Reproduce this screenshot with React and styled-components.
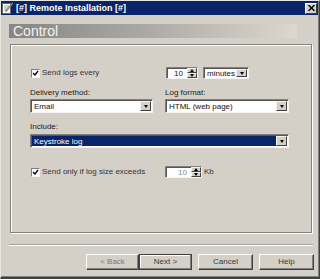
import React from "react";
import styled, { createGlobalStyle } from "styled-components";

const Global = createGlobalStyle`
  html, body { margin: 0; padding: 0; background: #d4d0c8; }
  body { font-family: "Liberation Sans", Arial, sans-serif; }
  * { box-sizing: border-box; }
`;

const Window = styled.div`
  width: 320px;
  height: 279px;
  background: #d4d0c8;
  border-top: 1px solid #e8e6e0;
  border-left: 1px solid #e8e6e0;
  border-right: 1px solid #404040;
  border-bottom: 2px solid #404040;
  box-shadow: inset -1px -1px 0 #808080;
  display: flex;
  flex-direction: column;
  overflow: hidden;
`;

const TitleBar = styled.div`
  height: 14px;
  margin-right: 1px;
  background: #0a246a;
  display: flex;
  align-items: center;
  padding: 0 1px 0 1px;
  gap: 3px;
`;

const TitleText = styled.span`
  flex: 1;
  color: #fff;
  font-weight: bold;
  font-size: 9px;
  line-height: 14px;
  white-space: nowrap;
`;

const CloseBtn = styled.div`
  width: 12px;
  height: 11px;
  background: #d4d0c8;
  border-top: 1px solid #fff;
  border-left: 1px solid #fff;
  border-right: 1px solid #404040;
  border-bottom: 1px solid #404040;
  display: flex;
  align-items: center;
  justify-content: center;
`;

const Body = styled.div`
  flex: 1;
  display: flex;
  flex-direction: column;
  padding: 9px 0 0 8px;
`;

const Band = styled.div`
  width: 288px;
  height: 14px;
  background: linear-gradient(to right, #858585 0%, #a9a7a2 45%, #dcd8d0 100%);
  color: #f2f2f2;
  font-size: 14px;
  line-height: 15px;
  padding-left: 4px;
  overflow: hidden;
`;

const Panel = styled.div`
  margin: 6px 0 0 1px;
  width: 302px;
  height: 189px;
  border: 1px solid #808080;
  box-shadow: inset 1px 1px 0 #fff, 1px 1px 0 #fff;
  padding: 22px 0 0 19px;
  display: grid;
  grid-template-columns: 123px 124px;
  column-gap: 12px;
  align-content: start;
`;

const Row = styled.div`
  display: flex;
  align-items: center;
  height: 12px;
  margin-top: ${(p) => p.$mt || 0}px;
`;

const Label = styled.div`
  font-size: 8px;
  line-height: 10px;
  height: 10px;
  color: #1a1a1a;
  margin-top: ${(p) => p.$mt || 0}px;
  grid-column: ${(p) => (p.$span ? "1 / 3" : "auto")};
  white-space: nowrap;
`;

const Check = styled.div`
  width: 9px;
  height: 9px;
  margin-left: 1px;
  background: #fff;
  border-top: 1px solid #808080;
  border-left: 1px solid #808080;
  border-right: 1px solid #f4f4f4;
  border-bottom: 1px solid #f4f4f4;
  display: flex;
  align-items: center;
  justify-content: center;
  flex-shrink: 0;
`;

const CheckText = styled.span`
  font-size: 8px;
  line-height: 10px;
  color: #333;
  margin-left: 2px;
  white-space: nowrap;
`;

const Field = styled.div`
  display: flex;
  align-items: stretch;
  width: ${(p) => p.$w}px;
  height: ${(p) => p.$h || 14}px;
  margin-top: ${(p) => p.$mt || 0}px;
  margin-left: ${(p) => p.$ml || 0}px;
  background: #fff;
  border-top: 1px solid #808080;
  border-left: 1px solid #808080;
  border-right: 1px solid #f4f4f4;
  border-bottom: 1px solid #f4f4f4;
  box-shadow: inset 1px 1px 0 #555;
  grid-column: ${(p) => (p.$span ? "1 / 3" : "auto")};
  flex-shrink: 0;
`;

const FieldText = styled.div`
  flex: 1;
  font-size: 8px;
  line-height: ${(p) => p.$lh || 12}px;
  padding: 0 ${(p) => (p.$right ? 4 : 1)}px 0 ${(p) => (p.$right ? 0 : 2)}px;
  margin: 1px 0 1px 1px;
  text-align: ${(p) => (p.$right ? "right" : "left")};
  color: ${(p) => (p.$sel ? "#fff" : p.$dim ? "#8a8a8a" : "#111")};
  background: ${(p) => (p.$sel ? "#0a246a" : "transparent")};
  white-space: nowrap;
  overflow: hidden;
`;

const DropBtn = styled.div`
  width: 11px;
  margin: 1px 1px 1px 0;
  background: #d4d0c8;
  border-top: 1px solid #f4f4f4;
  border-left: 1px solid #f4f4f4;
  border-right: 1px solid #404040;
  border-bottom: 1px solid #404040;
  display: flex;
  align-items: center;
  justify-content: center;
`;

const Arrow = styled.div`
  width: 0;
  height: 0;
  border-left: 2.5px solid transparent;
  border-right: 2.5px solid transparent;
  border-${(p) => (p.$up ? "bottom" : "top")}: 3px solid #000;
`;

const Spin = styled.div`
  width: 10px;
  display: flex;
  flex-direction: column;
`;

const SpinHalf = styled.div`
  flex: 1;
  background: #d4d0c8;
  border-top: 1px solid #f4f4f4;
  border-left: 1px solid #f4f4f4;
  border-right: 1px solid #404040;
  border-bottom: 1px solid #404040;
  display: flex;
  align-items: center;
  justify-content: center;
`;

const Unit = styled.span`
  font-size: 8px;
  line-height: 10px;
  color: #333;
  margin-left: 2px;
`;

const Separator = styled.div`
  margin: 11px 0 0 0;
  width: 304px;
  height: 2px;
  border-top: 1px solid #a0a0a0;
  border-bottom: 1px solid #fff;
`;

const Buttons = styled.div`
  display: flex;
  margin: 8px 0 0 77px;
`;

const Button = styled.div`
  width: ${(p) => p.$w || 54}px;
  height: 16px;
  margin-left: ${(p) => p.$ml || 0}px;
  background: #d4d0c8;
  border-top: 1px solid ${(p) => (p.$def ? "#404040" : "#fff")};
  border-left: 1px solid ${(p) => (p.$def ? "#404040" : "#fff")};
  border-right: 1px solid #404040;
  border-bottom: 1px solid #404040;
  box-shadow: inset -1px -1px 0 #808080${(p) => (p.$def ? ", inset 1px 1px 0 #fff" : "")};
  font-size: 8px;
  line-height: 14px;
  text-align: center;
  color: ${(p) => (p.$dis ? "#7a7a7a" : "#3a3a3a")};
`;

const CheckMark = () => (
  <svg width="7" height="7" viewBox="0 0 7 7">
    <path d="M1 3 L3 5 L6 1" stroke="#000" strokeWidth="1.3" fill="none" />
  </svg>
);

const AppIcon = () => (
  <svg width="11" height="12" viewBox="0 0 11 12">
    <rect x="0.5" y="1.5" width="8" height="10" fill="#fff" stroke="#6a6a6a" />
    <line x1="2" y1="4" x2="7" y2="4" stroke="#8aa" />
    <line x1="2" y1="6" x2="7" y2="6" stroke="#8aa" />
    <line x1="2" y1="8" x2="6" y2="8" stroke="#8aa" />
    <path d="M10.5 0.5 L4 8 L3.5 9.5 L5 9 L11 1.5 Z" fill="#e0c060" stroke="#555" strokeWidth="0.6" />
  </svg>
);

const CloseX = () => (
  <svg width="7" height="6" viewBox="0 0 7 6">
    <path d="M0.5 0 L6.5 6 M6.5 0 L0.5 6" stroke="#000" strokeWidth="1.4" />
  </svg>
);

const Select = ({ w, text, sel, span, mt }) => (
  <Field $w={w} $span={span} $mt={mt}>
    <FieldText $sel={sel}>{text}</FieldText>
    <DropBtn>
      <Arrow />
    </DropBtn>
  </Field>
);

const Spinner = ({ w, value, dim, ml }) => (
  <Field $w={w} $h={12} $ml={ml}>
    <FieldText $right $dim={dim} $lh={10}>{value}</FieldText>
    <Spin>
      <SpinHalf><Arrow $up /></SpinHalf>
      <SpinHalf><Arrow /></SpinHalf>
    </Spin>
  </Field>
);

export default function App() {
  return (
    <>
      <Global />
      <Window>
        <TitleBar>
          <AppIcon />
          <TitleText>[#] Remote Installation [#]</TitleText>
          <CloseBtn><CloseX /></CloseBtn>
        </TitleBar>
        <Body>
          <Band>Control</Band>
          <Panel>
            <Row>
              <Check><CheckMark /></Check>
              <CheckText>Send logs every</CheckText>
            </Row>
            <Row>
              <Spinner w={32} value="10" ml={1} />
              <Field $w={46} $h={12} $ml={5}>
                <FieldText $lh={10}>minutes</FieldText>
                <DropBtn><Arrow /></DropBtn>
              </Field>
            </Row>
            <Label $mt={9}>Delivery method:</Label>
            <Label $mt={9}>Log format:</Label>
            <Select w={123} text="Email" mt={1} />
            <Select w={124} text="HTML (web page)" mt={1} />
            <Label $span $mt={9}>Include:</Label>
            <Select w={259} text="Keystroke log" sel span mt={2} />
            <Row $mt={18}>
              <Check><CheckMark /></Check>
              <CheckText>Send only if log size exceeds</CheckText>
            </Row>
            <Row $mt={18}>
              <Spinner w={37} value="10" dim />
              <Unit>Kb</Unit>
            </Row>
          </Panel>
          <Separator />
          <Buttons>
            <Button $w={53} $dis>&lt; Back</Button>
            <Button $w={53} $def>Next &gt;</Button>
            <Button $w={55} $ml={6}>Cancel</Button>
            <Button $w={55} $ml={6}>Help</Button>
          </Buttons>
        </Body>
      </Window>
    </>
  );
}
